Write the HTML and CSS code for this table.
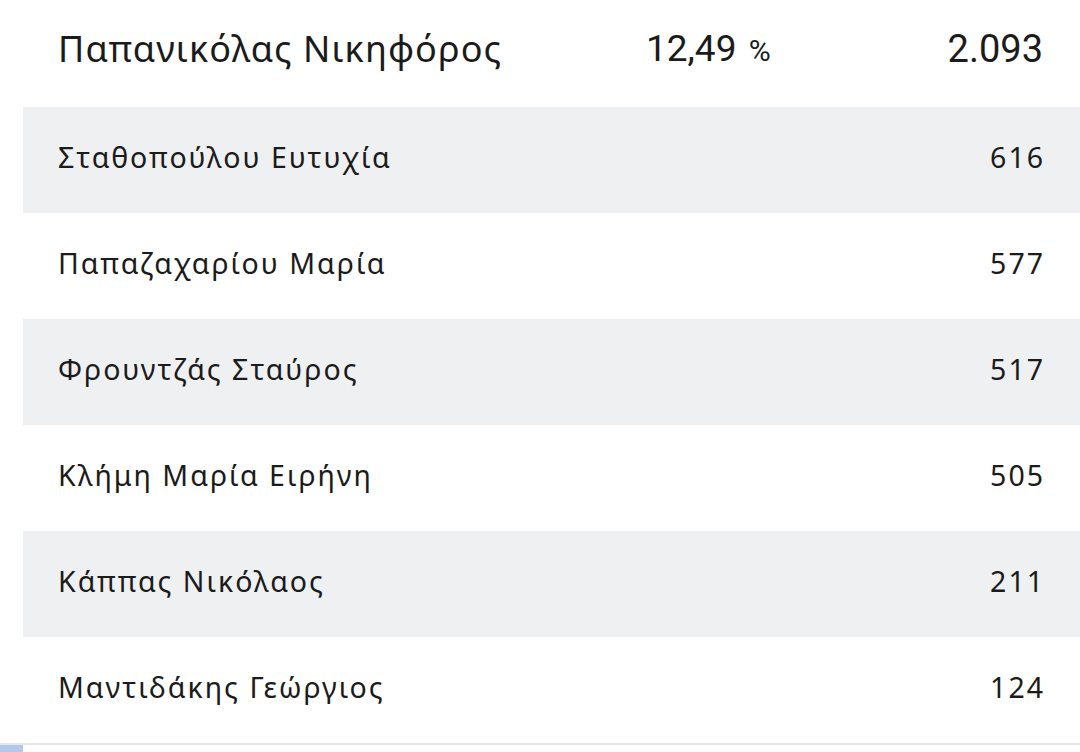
FILE: index.html
```html
<!DOCTYPE html>
<html lang="el">
<head>
<meta charset="utf-8">
<link rel="stylesheet" href="styles.css">
</head>
<body>
<div class="page">
  <div class="head-row">
    <span class="head-name">Παπανικόλας Νικηφόρος</span>
    <span class="head-pct">12,49 <span class="pct-sign">%</span></span>
    <span class="head-count">2.093</span>
  </div>
  <div class="list">
    <div class="row alt"><span class="name">Σταθοπούλου Ευτυχία</span><span class="count">616</span></div>
    <div class="row"><span class="name">Παπαζαχαρίου Μαρία</span><span class="count">577</span></div>
    <div class="row alt"><span class="name">Φρουντζάς Σταύρος</span><span class="count">517</span></div>
    <div class="row"><span class="name">Κλήμη Μαρία Ειρήνη</span><span class="count">505</span></div>
    <div class="row alt"><span class="name">Κάππας Νικόλαος</span><span class="count">211</span></div>
    <div class="row"><span class="name">Μαντιδάκης Γεώργιος</span><span class="count">124</span></div>
  </div>
  <div class="bottom">
    <div class="bottom-tab"></div>
  </div>
</div>
</body>
</html>
```
FILE: styles.css
```css
html, body {
  margin: 0;
  padding: 0;
  background: #ffffff;
}
.page {
  width: 1080px;
  height: 752px;
  overflow: hidden;
  color: #1b1b1b;
  font-family: "Noto Sans", "Open Sans", sans-serif;
}
.head-row {
  height: 107px;
  display: flex;
  align-items: center;
  padding: 0 37px 10px 58px;
  box-sizing: border-box;
}
.head-name {
  font-size: 36px;
  letter-spacing: 1.1px;
  width: 588px;
  white-space: nowrap;
}
.head-pct {
  font-family: Roboto, sans-serif;
  font-size: 37px;
  white-space: nowrap;
}
.pct-sign {
  font-size: 30px;
  margin-left: 3px;
}
.head-count {
  margin-left: auto;
  font-family: Roboto, sans-serif;
  font-size: 38px;
}
.list {
  margin-left: 23px;
}
.row {
  height: 106px;
  display: flex;
  align-items: center;
  justify-content: space-between;
  padding: 0 35px 7px 35px;
  box-sizing: border-box;
  font-size: 28.5px;
  letter-spacing: 2px;
}
.row.alt {
  background: #eff0f2;
}
.count {
  font-family: "Noto Sans", sans-serif;
}
.bottom {
  border-top: 2px solid #e4e6ea;
  height: 10px;
}
.bottom-tab {
  width: 23px;
  height: 100%;
  background: #b4c8ec;
}
```
